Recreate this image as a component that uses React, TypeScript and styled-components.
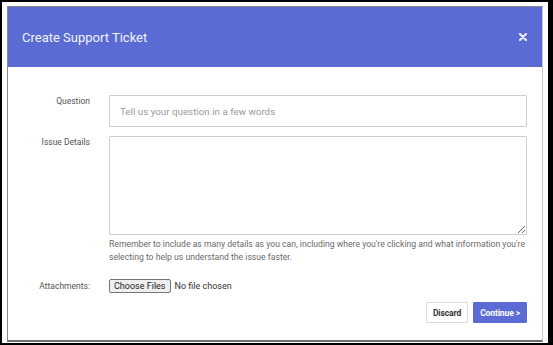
import React, {FC} from 'react';
import styled, {createGlobalStyle} from "styled-components";

const GlobalStyle = createGlobalStyle`
  html, body {
    margin: 0;
    padding: 0;
    background: #000;
  }

  body {
    font-family: Roboto, "Liberation Sans", Arial, sans-serif;
  }
`

const Frame = styled.div`
  width: 546px;
  height: 341px;
  margin: 2px 0 0 2px;
  padding: 4px 5px 0 5px;
  box-sizing: border-box;
  background: #fff;
`

const Modal = styled.div`
  width: 536px;
  height: 336px;
  box-sizing: border-box;
  border: 1px solid #8a8a8a;
  border-right-color: #c8c8c8;
  border-bottom: 2px solid #6e6e6e;
  background: #fff;

  display: flex;
  flex-direction: column;
`

const ModalHeader = styled.div`
  height: 60px;
  padding: 0 15px 0 14px;
  background: #5a6bd4;
  color: #f2f3ff;

  display: flex;
  align-items: center;
  justify-content: space-between;
`

const ModalTitle = styled.h1`
  margin: 0;
  font-size: 13px;
  font-weight: 400;
`

const CloseButton = styled.button`
  padding: 0;
  border: none;
  background: none;
  width: 9px;
  height: 9px;
  display: flex;
  align-items: center;
  justify-content: center;
  cursor: pointer;
`

const ModalBody = styled.form`
  padding: 28px 15px 0 0;

  display: grid;
  grid-template-columns: 82px 1fr;
  column-gap: 19px;
  align-items: start;
`

const FieldLabel = styled.label<{$top?: number}>`
  padding-top: ${p => p.$top ?? 0}px;
  font-size: 8.5px;
  color: #555;
  text-align: right;
  line-height: 12px;
`

const TextInput = styled.input`
  height: 32px;
  margin-bottom: 9px;
  padding: 0 10px;
  box-sizing: border-box;
  border: 1px solid #cfcfcf;
  border-radius: 1px;
  font-family: inherit;
  font-size: 9.8px;
  color: #333;
  outline: none;

  &::placeholder {
    color: #9a9a9a;
  }
`

const TextArea = styled.textarea`
  display: block;
  width: 100%;
  height: 99px;
  box-sizing: border-box;
  border: 1px solid #cfcfcf;
  border-radius: 1px;
  font-family: inherit;
  font-size: 9.5px;
  outline: none;
  resize: vertical;
`

const HelpText = styled.p`
  margin: 3px 0 0;
  font-size: 8.65px;
  line-height: 13px;
  color: #6a6a6a;
`

const FileInput = styled.input`
  margin: 15px 0 0;
  font-family: inherit;
  font-size: 9px;
  color: #333;

  &::file-selector-button {
    font-family: inherit;
    font-size: 9px;
    padding: 1px 4px;
    margin-right: 4px;
    color: #222;
    border: 1px solid #767676;
    border-radius: 2px;
    background: #efefef;
  }
`

const Actions = styled.div`
  grid-column: 2;
  margin-top: 9px;

  gap: 5px;
  display: flex;
  justify-content: flex-end;
`

const ActionButton = styled.button<{$primary?: boolean}>`
  height: 21px;
  padding: 0 6px;
  border: 1px solid ${p => p.$primary ? '#5a6bd4' : '#dcdcdc'};
  border-radius: 1px;
  background: ${p => p.$primary ? '#5a6bd4' : '#fff'};
  color: ${p => p.$primary ? '#fff' : '#333'};
  font-family: inherit;
  font-size: 8.5px;
  font-weight: 700;
  letter-spacing: -0.1px;
  cursor: pointer;
`

const App: FC = () => {
  return (
    <>
      <GlobalStyle/>
      <Frame>
        <Modal>
          <ModalHeader>
            <ModalTitle>Create Support Ticket</ModalTitle>
            <CloseButton type="button" aria-label="Close">
              <svg width="8" height="8" viewBox="0 0 8 8">
                <path d="M1 1L7 7M7 1L1 7" stroke="#eceefc" strokeWidth="2.2" strokeLinecap="round"/>
              </svg>
            </CloseButton>
          </ModalHeader>
          <ModalBody onSubmit={e => e.preventDefault()}>
            <FieldLabel $top={0} htmlFor="question">Question</FieldLabel>
            <TextInput id="question" placeholder="Tell us your question in a few words"/>

            <FieldLabel $top={0} htmlFor="details">Issue Details</FieldLabel>
            <div>
              <TextArea id="details"/>
              <HelpText>
                Remember to include as many details as you can, including where you're clicking and what information you're selecting to help us understand the issue faster.
              </HelpText>
            </div>

            <FieldLabel $top={16} htmlFor="files">Attachments:</FieldLabel>
            <FileInput id="files" type="file" multiple/>

            <Actions>
              <ActionButton type="button">Discard</ActionButton>
              <ActionButton type="submit" $primary>Continue &gt;</ActionButton>
            </Actions>
          </ModalBody>
        </Modal>
      </Frame>
    </>
  );
};

export default App;
